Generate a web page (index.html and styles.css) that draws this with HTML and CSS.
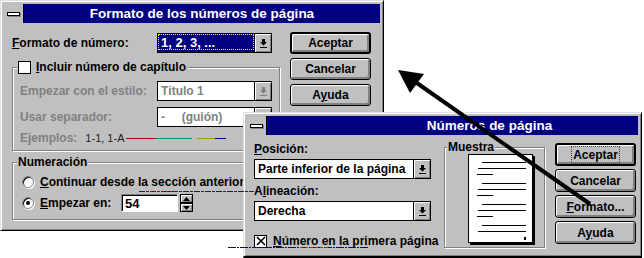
FILE: index.html
```html
<!DOCTYPE html>
<html lang="es">
<head>
    <meta charset="UTF-8">
    <meta name="viewport" content="width=device-width, initial-scale=1.0">
    <title>Números de página</title>
    <link rel="stylesheet" href="styles.css">
</head>
<body>
<div class="desktop">

    <!-- Formato de los números de página -->
    <div class="dialog dlg-format">
        <div class="titlebar">
            <span class="sysmenu"><span class="sysmenu-bar"></span></span>
            <span class="caption">Formato de los números de página</span>
        </div>
        <div class="format-body">
            <div class="main-col">
                <div class="field-row">
                    <span class="label"><u>F</u>ormato de número:</span>
                    <div class="combo selected">
                        <span class="combo-text"><span class="focus-rect">1, 2, 3, ...</span></span>
                        <span class="combo-btn">
                            <svg width="7" height="9" viewBox="0 0 7 9"><path d="M2 0h3v3h2L3.5 6.5 0 3h2z"/><rect y="8" width="7" height="1"/></svg>
                        </span>
                    </div>
                </div>

                <fieldset class="group group-chapter">
                    <legend><span class="checkbox"></span><span><u>I</u>ncluir número de capítulo</span></legend>
                    <div class="field-row disabled">
                        <span class="label label-inset">Empezar con el estilo:</span>
                        <div class="combo">
                            <span class="combo-text">Título 1</span>
                            <span class="combo-btn">
                                <svg width="7" height="9" viewBox="0 0 7 9"><path d="M2 0h3v3h2L3.5 6.5 0 3h2z"/><rect y="8" width="7" height="1"/></svg>
                            </span>
                        </div>
                    </div>
                    <div class="field-row disabled gap-top">
                        <span class="label label-inset">Usar separador:</span>
                        <div class="combo">
                            <span class="combo-text">-&nbsp;&nbsp;&nbsp;&nbsp;&nbsp;(guión)</span>
                            <span class="combo-btn">
                                <svg width="7" height="9" viewBox="0 0 7 9"><path d="M2 0h3v3h2L3.5 6.5 0 3h2z"/><rect y="8" width="7" height="1"/></svg>
                            </span>
                        </div>
                    </div>
                    <div class="examples">
                        <span class="examples-label">Ejemplos:</span>
                        <span class="examples-value">1-1, 1-A</span>
                    </div>
                </fieldset>

                <fieldset class="group group-numbering">
                    <legend>Numeración</legend>
                    <div class="radio-row">
                        <span class="radio"></span>
                        <span><u>C</u>ontinuar desde la sección anterior</span>
                    </div>
                    <div class="radio-row">
                        <span class="radio checked"></span>
                        <span class="start-label"><u>E</u>mpezar en:</span>
                        <span class="textbox">54</span>
                        <span class="spin">
                            <span class="spin-btn"><svg width="7" height="4" viewBox="0 0 7 4"><path d="M3.5 0 7 4H0z"/></svg></span>
                            <span class="spin-btn"><svg width="7" height="4" viewBox="0 0 7 4"><path d="M0 0h7L3.5 4z"/></svg></span>
                        </span>
                    </div>
                </fieldset>
            </div>

            <div class="buttons">
                <button class="btn default">Aceptar</button>
                <button class="btn">Cancelar</button>
                <button class="btn">A<u>y</u>uda</button>
            </div>
        </div>
    </div>

    <!-- Números de página -->
    <div class="dialog dlg-pages">
        <div class="titlebar">
            <span class="sysmenu"><span class="sysmenu-bar"></span></span>
            <span class="caption caption-offset">Números de página</span>
        </div>
        <div class="pages-body">
            <div class="pages-left">
                <span class="label-top"><u>P</u>osición:</span>
                <div class="combo combo-wide">
                    <span class="combo-text">Parte inferior de la página</span>
                    <span class="combo-btn">
                        <svg width="7" height="9" viewBox="0 0 7 9"><path d="M2 0h3v3h2L3.5 6.5 0 3h2z"/><rect y="8" width="7" height="1"/></svg>
                    </span>
                </div>
                <span class="label-top label-second">A<u>l</u>ineación:</span>
                <div class="combo combo-wide">
                    <span class="combo-text">Derecha</span>
                    <span class="combo-btn">
                        <svg width="7" height="9" viewBox="0 0 7 9"><path d="M2 0h3v3h2L3.5 6.5 0 3h2z"/><rect y="8" width="7" height="1"/></svg>
                    </span>
                </div>
                <div class="check-row">
                    <span class="checkbox">
                        <svg width="10" height="10" viewBox="0 0 10 10"><path d="M1 1l8 8M9 1l-8 8" stroke="#000" stroke-width="1.6"/></svg>
                    </span>
                    <span><u>N</u>úmero en la primera página</span>
                </div>
            </div>

            <fieldset class="group group-sample">
                <legend>Muestra</legend>
                <div class="page">
                    <span class="ln ln-long"></span>
                    <span class="ln ln-full"></span>
                    <span class="ln ln-short"></span>
                    <span class="ln ln-long gap"></span>
                    <span class="ln ln-full"></span>
                    <span class="ln ln-short"></span>
                    <span class="ln ln-long gap"></span>
                    <span class="ln ln-full"></span>
                    <span class="ln ln-short"></span>
                    <span class="ln ln-long gap"></span>
                    <span class="ln ln-full"></span>
                    <span class="page-num"></span>
                </div>
            </fieldset>

            <div class="buttons buttons-pages">
                <button class="btn default"><span class="focus-dots">Aceptar</span></button>
                <button class="btn">Cancelar</button>
                <button class="btn"><u>F</u>ormato...</button>
                <button class="btn">A<u>y</u>uda</button>
            </div>
        </div>
    </div>

    <!-- arrow and screen capture noise drawn over both windows -->
    <svg class="overlay" width="644" height="258" viewBox="0 0 644 258">
        <g stroke-width="1">
            <line x1="126" y1="138.5" x2="155" y2="138.5" stroke="#b00020"/>
            <line x1="155" y1="138.5" x2="192" y2="138.5" stroke="#008a8a"/>
            <line x1="197" y1="138.5" x2="215" y2="138.5" stroke="#a0a000"/>
            <line x1="215" y1="138.5" x2="226" y2="138.5" stroke="#000080"/>
            <line x1="139" y1="191.5" x2="254" y2="191.5" stroke="#202040" stroke-dasharray="6 1 3 1"/>
            <line x1="150" y1="191.5" x2="175" y2="191.5" stroke="#b00020" stroke-dasharray="2 2"/>
            <line x1="228" y1="247.5" x2="368" y2="247.5" stroke="#101060" stroke-dasharray="8 1 2 1"/>
            <line x1="300" y1="247.5" x2="330" y2="247.5" stroke="#c03000" stroke-dasharray="3 2"/>
        </g>
        <line x1="590" y1="204" x2="414" y2="81" stroke="#000" stroke-width="4"/>
        <polygon points="398,70 424,74 410,93" fill="#000"/>
    </svg>
</div>
</body>
</html>
```

FILE: styles.css
```css
body {
    margin: 0;
    background-color: #fff;
    font-family: "Liberation Sans", Arial, sans-serif;
    font-size: 12px;
    font-weight: bold;
    color: #000;
}

.desktop {
    position: relative;
    width: 644px;
    height: 258px;
    overflow: hidden;
}

/* window frame */
.dialog {
    position: absolute;
    box-sizing: border-box;
    background: #c0c0c0;
    border: 1px solid;
    border-color: #dfdfdf #000 #000 #dfdfdf;
    box-shadow: inset 1px 1px #fff, inset -1px -1px #808080;
    padding: 3px;
    display: flex;
    flex-direction: column;
}

.dlg-format {
    left: 0;
    top: 0;
    width: 384px;
    height: 231px;
}

.dlg-pages {
    left: 243px;
    top: 112px;
    width: 399px;
    height: 146px;
    border-bottom-width: 2px;
}

.titlebar {
    display: flex;
    height: 19px;
    flex-shrink: 0;
}

.sysmenu {
    width: 19px;
    border-right: 1px solid #000;
    display: flex;
    align-items: center;
    justify-content: center;
}

.sysmenu-bar {
    width: 11px;
    height: 2px;
    background: #fff;
    border: 1px solid #000;
    box-shadow: 1px 1px #808080;
}

.caption {
    flex: 1;
    background: #000080;
    color: #fff;
    font-size: 13.5px;
    line-height: 19px;
    text-align: center;
    white-space: nowrap;
}

.caption-offset {
    padding-left: 74px;
}

/* first dialog */
.format-body {
    display: flex;
    padding-left: 8px;
}

.main-col {
    width: 268px;
    padding-top: 10px;
}

.field-row {
    display: flex;
    align-items: center;
    height: 20px;
}

.field-row.gap-top {
    margin-top: 6px;
}

.label {
    width: 145px;
    flex-shrink: 0;
}

.label-inset {
    width: 137px;
}

.disabled .label,
.disabled .combo-text,
.examples-label {
    color: #808080;
}

.disabled .combo-btn svg {
    fill: #808080;
}

/* drop-down list */
.combo {
    box-sizing: border-box;
    display: flex;
    width: 115px;
    height: 20px;
    border: 1px solid #000;
    background: #fff;
}

.combo-wide {
    width: 177px;
}

.combo-text {
    flex: 1;
    padding-left: 3px;
    line-height: 18px;
    white-space: nowrap;
    overflow: hidden;
}

.combo.selected .combo-text {
    background: #000080;
    color: #fff;
    padding: 1px;
    font-size: 13px;
}

.focus-rect {
    display: block;
    height: 14px;
    line-height: 15px;
    padding-left: 2px;
    outline: 1px dotted #ffff00;
}

.combo-btn {
    width: 16px;
    border-left: 1px solid #000;
    background: #c0c0c0;
    box-shadow: inset 1px 1px #fff, inset -1px -1px #808080;
    display: flex;
    align-items: center;
    justify-content: center;
}

/* group boxes */
.group {
    margin: 7px 0 0;
    padding: 0 7px 5px;
    min-width: 0;
    border: 1px solid #808080;
    box-shadow: 1px 1px #fff, inset 1px 1px #fff;
}

.group legend {
    display: flex;
    align-items: center;
    gap: 5px;
    height: 14px;
    margin-left: -3px;
    padding: 0 2px 0 1px;
    background: #c0c0c0;
}

.group-chapter .field-row:first-of-type {
    margin-top: 7px;
}

.checkbox {
    box-sizing: border-box;
    width: 13px;
    height: 13px;
    background: #fff;
    border: 1px solid #000;
    display: flex;
    align-items: center;
    justify-content: center;
    flex-shrink: 0;
}

.examples {
    display: flex;
    gap: 8px;
    height: 14px;
    line-height: 14px;
    margin-top: 4px;
}

.examples-value {
    font-weight: normal;
    font-size: 11px;
    color: #202020;
}

.group-numbering {
    margin-top: 4px;
    padding: 0 9px 7px;
}

.group-numbering legend {
    margin-left: -5px;
    padding: 0 1px;
}

.radio-row {
    display: flex;
    align-items: center;
    height: 18px;
    margin-top: 4px;
    white-space: nowrap;
}

.radio-row + .radio-row {
    margin-top: 3px;
}

.radio {
    box-sizing: border-box;
    width: 12px;
    height: 12px;
    margin-right: 6px;
    border-radius: 50%;
    border: 1px solid #808080;
    box-shadow: inset 1px 1px #000, 1px 1px #fff;
    background: #fff;
    display: flex;
    align-items: center;
    justify-content: center;
}

.radio.checked::after {
    content: "";
    width: 4px;
    height: 4px;
    border-radius: 50%;
    background: #000;
}

.start-label {
    width: 81px;
}

.textbox {
    box-sizing: border-box;
    width: 57px;
    height: 18px;
    border: 1px solid;
    border-color: #808080 #fff #fff #808080;
    box-shadow: inset 1px 1px #000;
    background: #fff;
    padding: 1px 0 0 3px;
    line-height: 15px;
    font-size: 13px;
}

.spin {
    display: flex;
    flex-direction: column;
    margin-left: 2px;
}

.spin-btn {
    box-sizing: border-box;
    width: 13px;
    height: 9px;
    border: 1px solid #000;
    background: #c0c0c0;
    box-shadow: inset 1px 1px #fff, inset -1px -1px #808080;
    display: flex;
    align-items: center;
    justify-content: center;
}

/* push buttons */
.buttons {
    display: flex;
    flex-direction: column;
    gap: 4px;
    margin-left: 10px;
    padding-top: 9px;
}

.btn {
    box-sizing: border-box;
    width: 81px;
    height: 22px;
    padding: 0;
    border: 1px solid #000;
    border-radius: 3px;
    background: #c0c0c0;
    box-shadow: inset 1px 1px #fff, inset -2px -2px #808080;
    font: inherit;
    color: #000;
}

.btn.default {
    border-width: 2px;
}

.focus-dots {
    outline: 1px dotted #404040;
    outline-offset: 1px;
}

/* second dialog */
.pages-body {
    display: flex;
    padding-left: 7px;
}

.pages-left {
    width: 177px;
    display: flex;
    flex-direction: column;
    padding-top: 7px;
}

.label-top {
    height: 14px;
    line-height: 14px;
    margin-bottom: 3px;
}

.label-second {
    margin-top: 5px;
}

.check-row {
    display: flex;
    align-items: center;
    gap: 6px;
    margin-top: 13px;
    white-space: nowrap;
}

.group-sample {
    width: 101px;
    box-sizing: border-box;
    margin: 5px 0 0 13px;
    height: 108px;
    padding: 0;
}

.group-sample legend {
    margin-left: 2px;
    padding: 0 1px;
}

.page {
    box-sizing: border-box;
    width: 65px;
    height: 89px;
    margin: 0 0 0 23px;
    background: #fff;
    border: 1px solid #000;
    box-shadow: 2px 2px #000;
    display: flex;
    flex-direction: column;
    align-items: flex-end;
    padding: 7px 6px 0 8px;
}

.ln {
    height: 1px;
    background: #000;
    margin-bottom: 5px;
}

.ln.gap {
    margin-top: 3px;
}

.ln-long {
    width: 44px;
}

.ln-full {
    width: 48px;
}

.ln-short {
    width: 16px;
    align-self: flex-start;
}

.page-num {
    width: 2px;
    height: 3px;
    background: #000;
}

.buttons-pages {
    margin-left: 10px;
    padding-top: 8px;
    gap: 3px;
}

.buttons-pages .btn {
    height: 23px;
}

.overlay {
    position: absolute;
    left: 0;
    top: 0;
    pointer-events: none;
}
```
